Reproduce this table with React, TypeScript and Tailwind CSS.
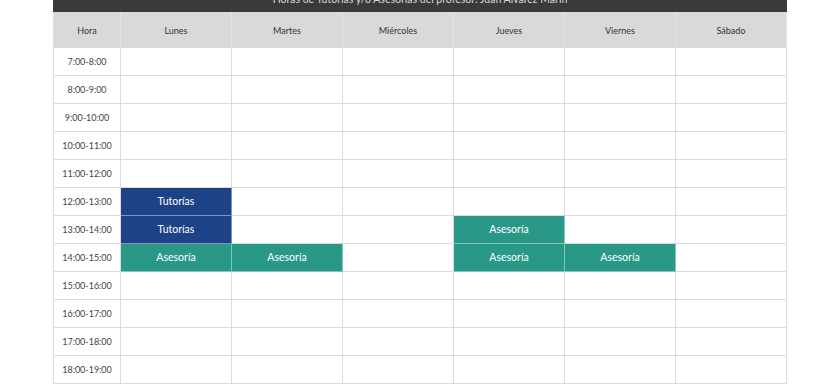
import React from 'react'

const days = ['Lunes', 'Martes', 'Miércoles', 'Jueves', 'Viernes', 'Sábado']

const hours = [
  '7:00-8:00',
  '8:00-9:00',
  '9:00-10:00',
  '10:00-11:00',
  '11:00-12:00',
  '12:00-13:00',
  '13:00-14:00',
  '14:00-15:00',
  '15:00-16:00',
  '16:00-17:00',
  '17:00-18:00',
  '18:00-19:00',
]

type Slot = { kind: 'tutoria' | 'asesoria' }

// key: `${hour}|${dayIndex}`
const schedule: Record<string, Slot> = {
  '12:00-13:00|0': { kind: 'tutoria' },
  '13:00-14:00|0': { kind: 'tutoria' },
  '13:00-14:00|3': { kind: 'asesoria' },
  '14:00-15:00|0': { kind: 'asesoria' },
  '14:00-15:00|1': { kind: 'asesoria' },
  '14:00-15:00|3': { kind: 'asesoria' },
  '14:00-15:00|4': { kind: 'asesoria' },
}

const cellBase = 'h-[28px] flex items-center justify-center border-r border-b'
const headClass = 'h-[36px] flex items-center justify-center pt-[2px] border-r border-[#e3e3e3] bg-[#d9d9d9] text-[9px] text-[#333]'

function Cell({ slot }: { slot?: Slot }) {
  if (!slot) return <div className={`${cellBase} border-[#dcdcdc] bg-white`} />
  if (slot.kind === 'tutoria') {
    return (
      <div className={`${cellBase} border-[#7d93bd] bg-[#1d4288] text-[10.5px] text-white`}>
        Tutorías
      </div>
    )
  }
  return (
    <div className={`${cellBase} border-[#86c7bb] bg-[#2a9886] text-[10.5px] text-white`}>
      Asesoría
    </div>
  )
}

export default function App() {
  return (
    <div className="min-h-[385px] bg-white" style={{ fontFamily: 'Lato, "Noto Sans", sans-serif' }}>
      <div className="ml-[53px] w-[734px]">
        {/* Title bar, partly scrolled off the top */}
        <div className="h-[12px] overflow-hidden bg-[#3a3a3a]">
          <p className="-mt-[8px] text-center text-[10.5px] leading-[14px] text-[#d8d8d8]">
            Horas de Tutorías y/o Asesorías del profesor: Juan Alvarez Marín
          </p>
        </div>

        <div className="grid grid-cols-[67px_repeat(6,111px)] border-l border-[#dcdcdc]">
          {/* Header */}
          <div className={headClass}>Hora</div>
          {days.map((d) => (
            <div key={d} className={headClass}>
              {d}
            </div>
          ))}

          {/* Rows */}
          {hours.map((h) => (
            <React.Fragment key={h}>
              <div className={`${cellBase} border-[#dcdcdc] bg-white text-[9px] text-[#444]`}>{h}</div>
              {days.map((_, i) => (
                <Cell key={i} slot={schedule[`${h}|${i}`]} />
              ))}
            </React.Fragment>
          ))}
        </div>
      </div>
    </div>
  )
}
